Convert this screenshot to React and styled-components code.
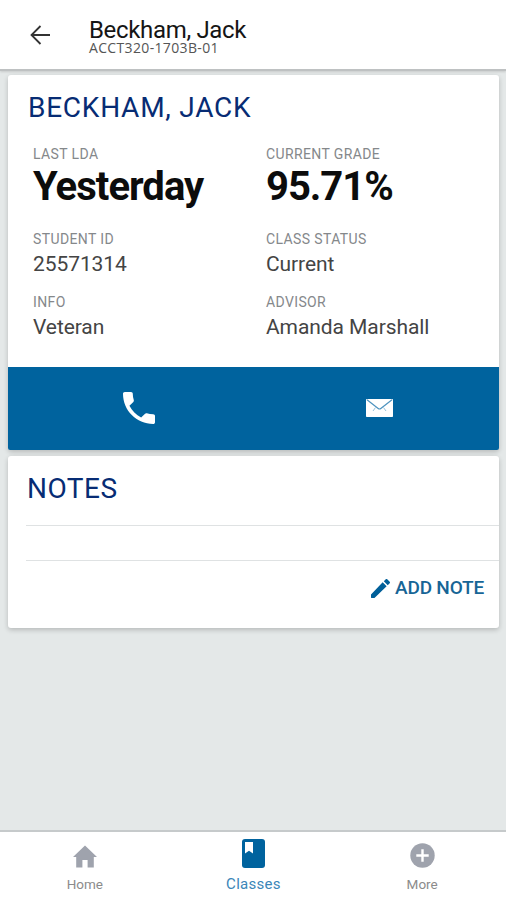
import React from "react"
import styled, { createGlobalStyle } from "styled-components"

const FIELDS = [
  { label: "LAST LDA", value: "Yesterday", big: true, spacing: -0.95 },
  { label: "CURRENT GRADE", value: "95.71%", big: true, spacing: -1.05 },
  { label: "STUDENT ID", value: "25571314" },
  { label: "CLASS STATUS", value: "Current" },
  { label: "INFO", value: "Veteran" },
  { label: "ADVISOR", value: "Amanda Marshall" },
]

const BackIcon = () => (
  <svg width="20" height="20" viewBox="0 0 20 20" fill="none" stroke="#333" strokeWidth="1.8">
    <path d="M10.5 1 L1.5 10 L10.5 19 M1.5 10 H20" />
  </svg>
)

const PhoneIcon = () => (
  <svg width="32" height="32" viewBox="3 3 18 18" fill="#fff">
    <path d="M6.62 10.79c1.44 2.83 3.76 5.14 6.59 6.59l2.2-2.2c.27-.27.67-.36 1.02-.24 1.12.37 2.33.57 3.57.57.55 0 1 .45 1 1V20c0 .55-.45 1-1 1-9.39 0-17-7.61-17-17 0-.55.45-1 1-1h3.5c.55 0 1 .45 1 1 0 1.25.2 2.45.57 3.57.11.35.03.74-.25 1.02l-2.2 2.2z" />
  </svg>
)

const MailIcon = () => (
  <svg width="27" height="18" viewBox="0 0 27 18" fill="none">
    <rect width="27" height="18" rx="0.8" fill="#fff" />
    <path d="M1 0.8 L12.2 9.5 Q13.5 10.5 14.8 9.5 L26 0.8" stroke="#4d93bf" strokeWidth="1.2" />
    <path d="M9.5 8.5 L7 12 M17.5 8.5 L20 12" stroke="#8dbad6" strokeWidth="0.9" />
  </svg>
)

const PencilIcon = () => (
  <svg width="19" height="19" viewBox="3 3 18 18" fill="#005f99">
    <path d="M3 17.8V20.2Q3 21 3.8 21H6.3L17.81 9.94l-3.75-3.75zM20.71 7.04a1 1 0 0 0 0-1.41l-2.34-2.34a1 1 0 0 0-1.41 0l-1.83 1.83 3.75 3.75 1.83-1.83z" />
  </svg>
)

const HomeIcon = () => (
  <svg width="24" height="23" viewBox="0 0 24 23" fill="#9fa3ad">
    <path d="M12 0.5 L24 12 H20.8 V22.5 H14.6 V15 H9.4 V22.5 H3.2 V12 H0 Z" />
  </svg>
)

const ClassesIcon = () => (
  <svg width="23" height="29" viewBox="0 0 23 29">
    <rect width="23" height="29" rx="3" fill="#00639e" />
    <path d="M3 3 H11 V14.5 L7 11.8 L3 14.5 Z" fill="#fff" />
  </svg>
)

const MoreIcon = () => (
  <svg width="25" height="25" viewBox="0 0 25 25">
    <circle cx="12.5" cy="12.5" r="12.2" fill="#9fa3ad" />
    <path d="M12.5 6.3 V18.7 M6.3 12.5 H18.7" stroke="#fff" strokeWidth="2.4" />
  </svg>
)

const App = () => (
  <Screen>
    <GlobalStyle />
    <Header>
      <BackButton aria-label="Back">
        <BackIcon />
      </BackButton>
      <div>
        <HeaderTitle>Beckham, Jack</HeaderTitle>
        <HeaderSubtitle>ACCT320-1703B-01</HeaderSubtitle>
      </div>
    </Header>
    <Main>
      <Card>
        <CardTitle>BECKHAM, JACK</CardTitle>
        <Fields>
          {FIELDS.map(({ label, value, big, spacing }) => (
            <div key={label}>
              <Label>{label}</Label>
              {big ? <BigValue $spacing={spacing}>{value}</BigValue> : <Value>{value}</Value>}
            </div>
          ))}
        </Fields>
        <Actions>
          <ActionButton aria-label="Call" $shift={17}>
            <PhoneIcon />
          </ActionButton>
          <ActionButton aria-label="Email" $shift={6}>
            <MailIcon />
          </ActionButton>
        </Actions>
      </Card>
      <Card>
        <CardTitle $notes>NOTES</CardTitle>
        <NoteRow />
        <AddNote>
          <PencilIcon />
          ADD NOTE
        </AddNote>
      </Card>
    </Main>
    <TabBar>
      <Tab>
        <HomeIcon />
        <TabLabel>Home</TabLabel>
      </Tab>
      <Tab>
        <ClassesIcon />
        <TabLabel $active>Classes</TabLabel>
      </Tab>
      <Tab>
        <MoreIcon />
        <TabLabel>More</TabLabel>
      </Tab>
    </TabBar>
  </Screen>
)

export default App

const GlobalStyle = createGlobalStyle`
  * {
    box-sizing: border-box;
  }
  body {
    margin: 0;
    font-family: Roboto, "Liberation Sans", sans-serif;
  }
  h1, h2, p {
    margin: 0;
    font-weight: 400;
  }
  button {
    border: 0;
    padding: 0;
    background: none;
    font-family: inherit;
  }
  svg {
    display: block;
  }
`

const Screen = styled.div`
  display: flex;
  flex-direction: column;
  width: 506px;
  height: 900px;
  overflow: hidden;
  background: #e4e8e8;
`

const Header = styled.header`
  display: flex;
  height: 71px;
  padding: 18px 0 0 30px;
  background: #fff;
  border-bottom: 2px solid #bec1c2;
  box-shadow: 0 1px 2px rgba(0, 0, 0, 0.12);
`

const BackButton = styled.button`
  width: 59px;
  height: 34px;
`

const HeaderTitle = styled.h1`
  font-size: 24px;
  line-height: 24px;
  letter-spacing: -0.33px;
  color: #151515;
`

const HeaderSubtitle = styled.p`
  font-family: "Open Sans", "Noto Sans", sans-serif;
  font-size: 14px;
  line-height: 12px;
  letter-spacing: 0.35px;
  color: #555;
`

const Main = styled.main`
  flex: 1;
  display: flex;
  flex-direction: column;
  gap: 6px;
  padding: 4px 7px 0 8px;
`

const Card = styled.section`
  background: #fff;
  border-radius: 3px;
  box-shadow: 0 2px 5px rgba(0, 0, 0, 0.2);
`

const CardTitle = styled.h2`
  padding: ${({ $notes }) => ($notes ? "17px 0 20px 19px" : "17px 0 22px 20px")};
  font-size: 28px;
  line-height: 32px;
  letter-spacing: ${({ $notes }) => ($notes ? 0.5 : 0.75)}px;
  color: #072c74;
`

const Fields = styled.div`
  display: grid;
  grid-template-columns: 233px 1fr;
  grid-template-rows: 85px 63px 73px;
  padding-left: 25px;
`

const Label = styled.p`
  font-size: 14px;
  line-height: 16px;
  letter-spacing: 0.38px;
  color: #85888b;
`

const Value = styled.p`
  margin-top: 5px;
  font-size: 21px;
  line-height: 24px;
  letter-spacing: -0.08px;
  color: #444;
`

const BigValue = styled.p`
  margin-top: 3px;
  font-size: 40px;
  font-weight: 700;
  line-height: 44px;
  letter-spacing: ${({ $spacing }) => $spacing}px;
  color: #0c0c0c;
`

const Actions = styled.div`
  display: grid;
  grid-template-columns: 1fr 1fr;
  height: 83px;
  background: #00639e;
  border-radius: 0 0 2px 2px;
`

const ActionButton = styled.button`
  display: flex;
  align-items: center;
  justify-content: center;
  padding: 0 0 1px ${({ $shift }) => $shift}px;
`

const NoteRow = styled.div`
  height: 36px;
  margin-left: 18px;
  border-top: 1px solid #dfe2e3;
  border-bottom: 1px solid #dfe2e3;
`

const AddNote = styled.button`
  display: flex;
  align-items: center;
  gap: 5px;
  height: 67px;
  padding: 0 15px 13px 0;
  margin-left: auto;
  font-size: 19px;
  font-weight: 500;
  line-height: 22px;
  letter-spacing: -0.2px;
  color: #176596;
`

const TabBar = styled.nav`
  display: grid;
  grid-template-columns: repeat(3, 1fr);
  height: 70px;
  background: #fff;
  border-top: 2px solid #c6cacb;
`

const Tab = styled.div`
  display: flex;
  flex-direction: column;
  align-items: center;
  justify-content: flex-end;
  padding: 0 0 7px 1px;
`

const TabLabel = styled.span`
  margin-top: 7px;
  font-size: ${({ $active }) => ($active ? 15 : 13.5)}px;
  line-height: 18px;
  letter-spacing: ${({ $active }) => ($active ? 0.3 : 0)}px;
  color: ${({ $active }) => ($active ? "#3a86b8" : "#8b8b8b")};
`
